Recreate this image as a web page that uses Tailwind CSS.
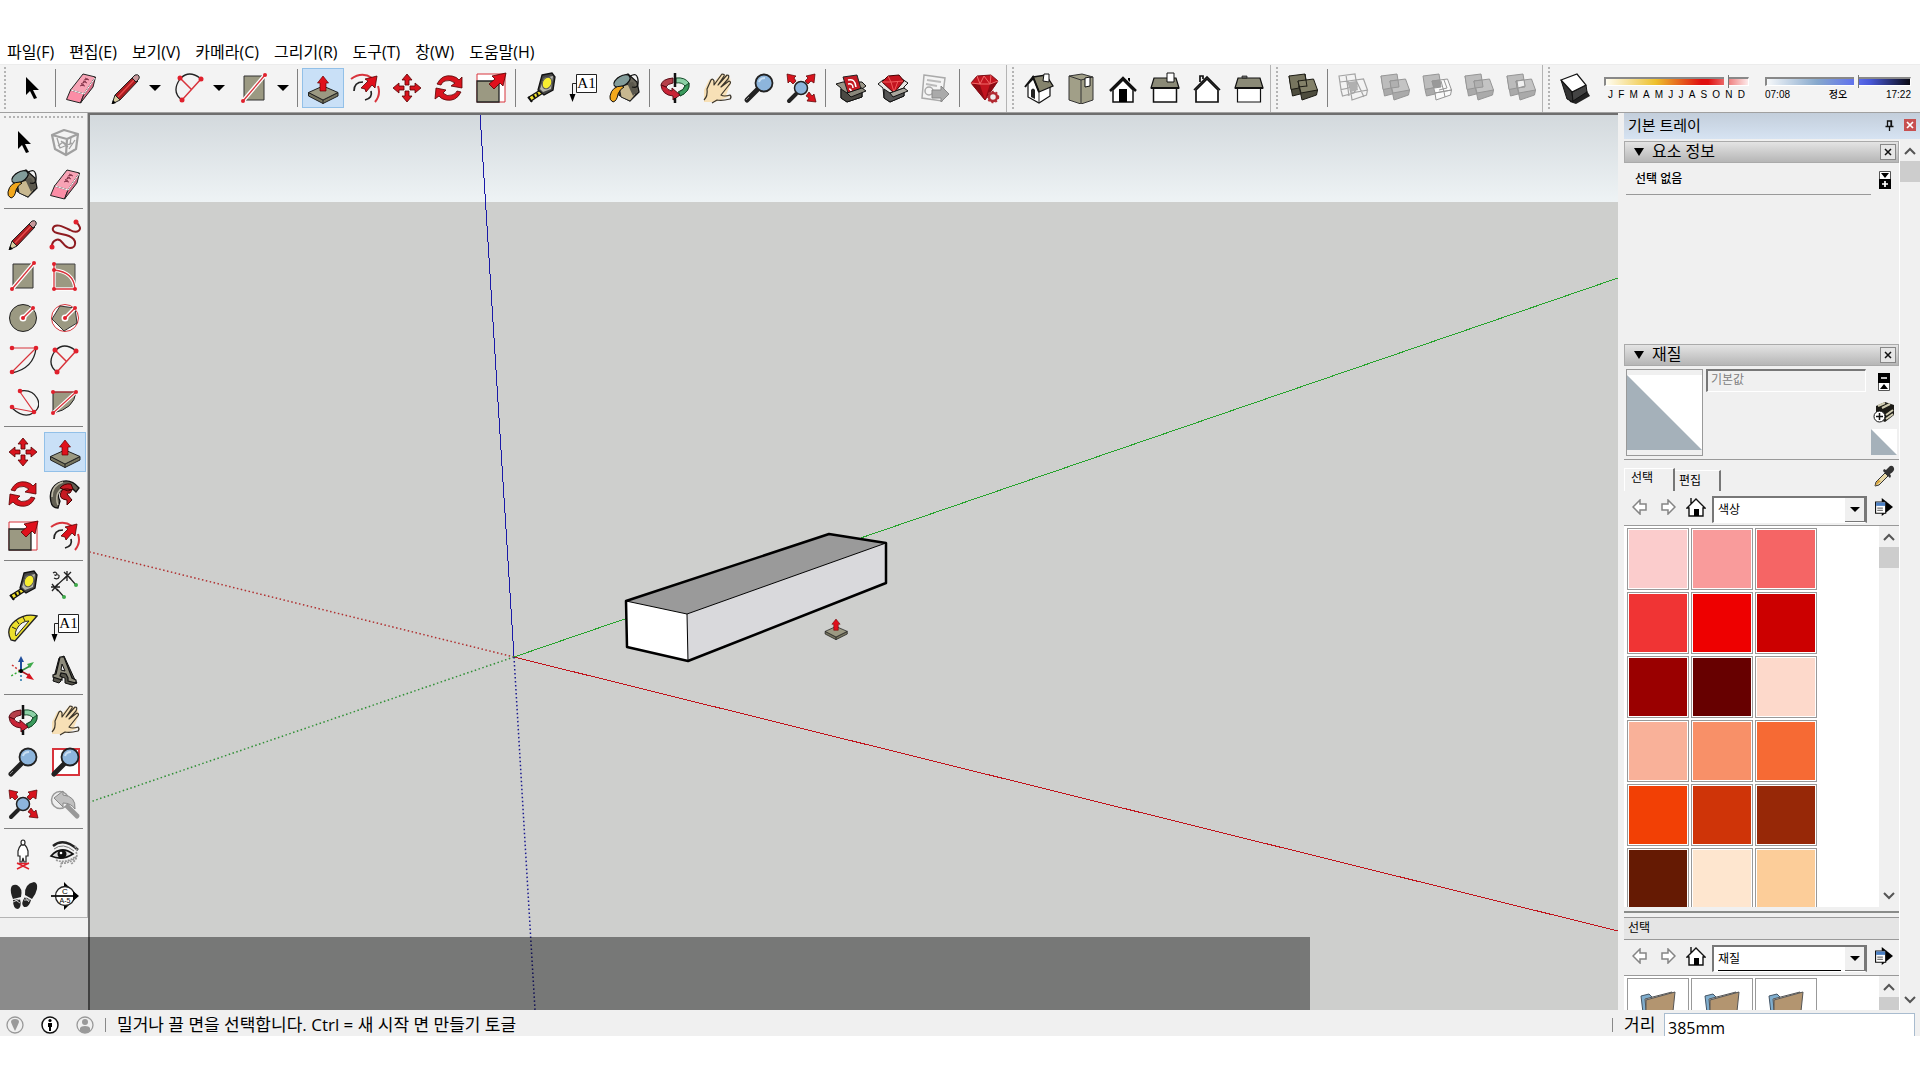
<!DOCTYPE html>
<html lang="ko">
<head>
    <meta charset="UTF-8">
    <meta name="viewport" content="width=device-width, initial-scale=1.0">
    <title>SketchUp</title>
    <script src="https://cdn.jsdelivr.net/npm/@tailwindcss/browser@4"></script>
</head>
<body class="h-screen flex flex-col overflow-hidden bg-white pt-10 pb-11 text-black font-['Open_Sans','Noto_Sans_CJK_KR',sans-serif]">

    <!-- Icon sprite -->
    <svg class="hidden" xmlns="http://www.w3.org/2000/svg">
        <symbol id="i-select" viewBox="0 0 32 32"><path d="M11 5v18l4-4 4 8 3-1-4-8h6z"/></symbol>
        <symbol id="i-eraser" viewBox="0 0 32 32"><g stroke="#222" stroke-linejoin="round"><path fill="#f7a3b5" d="M18 2l12.500 3L19 22 5.500 18z"/><path fill="#fb8da6" d="M5.500 18L19 22l-3.500 9-14-3.500z"/><path fill="#d86f88" d="M30.500 5L28 15 15.500 31 19 22z"/></g><path d="M6 18l13 4L30 6" stroke="#fff" fill="none"/><path d="M15 14l4-2m-3 0l5-3m-2-1l4-1m-7 6l4 1m-2-5l4 2m-2-5l4 2" stroke="#803045" fill="none"/></symbol>
        <symbol id="i-pencil" viewBox="0 0 32 32"><path fill="#a91c20" stroke="#222" d="M5 23L23 5l5 4-18 19z"/><path d="M8 25L25 7" stroke="#e8494b" stroke-width="1.500"/><path fill="#d9cda0" stroke="#222" d="M5 23l5 5-8 4z"/><path d="M2 32l1-4 3 3z"/><path fill="#c9999c" stroke="#222" d="M22 6l3-3q3-1 4 1t-1 4l-2 2z"/></symbol>
        <symbol id="i-freehand" viewBox="0 0 32 32"><path d="M27 4C36 12 28 16 21 12 13 8 6 5 4 10c-2 6 9 5 16 8 9 4 7 12 1 12-7 0-8-11-14-8-5 2-4 6-4 8" fill="none" stroke="#8e1b20" stroke-width="2"/><g fill="#e0202c"><circle cx="27" cy="4" r="2.500"/><circle cx="3" cy="29" r="2.500"/></g></symbol>
        <symbol id="i-arc" viewBox="0 0 32 32"><path d="M7 6q8-8 19 0M6 7q-9 13 2 21" fill="none" stroke="#222" stroke-width="1.300"/><path d="M7 7l10 10M27 7L8 28" stroke="#d8343c" stroke-width="1.500"/><g fill="#e0202c"><circle cx="6" cy="6" r="2.500"/><circle cx="27" cy="7" r="2.500"/><circle cx="8" cy="28" r="2.500"/></g></symbol>
        <symbol id="i-line-rect" viewBox="0 0 32 32"><path fill="#9b9982" stroke="#333" d="M6 4h20v24H6z"/><path d="M5 29L27 3" stroke="#fff" stroke-width="4"/><path d="M5 29L27 3" stroke="#d8343c" stroke-width="1.300"/><g fill="#e0202c"><circle cx="5" cy="29" r="2"/><circle cx="27" cy="3" r="2"/></g></symbol>
        <symbol id="i-rotrect" viewBox="0 0 32 32"><path fill="#9b9982" stroke="#444" d="M6 4h20v24H6z"/><path d="M5 4v25h21Q25 12 5 10" fill="none" stroke="#fff" stroke-width="3.500"/><path d="M5 4v25h21Q25 12 5 10" fill="none" stroke="#d8343c" stroke-width="1.300"/><g fill="#e0202c"><circle cx="5" cy="4" r="2"/><circle cx="5" cy="10" r="2"/><circle cx="5" cy="29" r="2"/><circle cx="26" cy="29" r="2"/></g></symbol>
        <symbol id="i-circle" viewBox="0 0 32 32"><circle cx="16" cy="16" r="13.500" fill="#9b9982" stroke="#222"/><path d="M16 16L26 6" stroke="#fff" stroke-width="4"/><circle cx="16" cy="16" r="3.500" fill="#fff"/><path d="M16 16L26 6" stroke="#d8343c" stroke-width="1.500"/><g fill="#e0202c"><circle cx="16" cy="16" r="2"/><circle cx="26" cy="6" r="2"/></g></symbol>
        <symbol id="i-polygon" viewBox="0 0 32 32"><circle cx="16" cy="16" r="13.500" fill="#fff" stroke="#d8343c"/><path fill="#9b9982" stroke="#333" d="M26 6l2 15-13 8L3 17 11 4z"/><path d="M16 16L26 6" stroke="#fff" stroke-width="4"/><circle cx="16" cy="16" r="3.500" fill="#fff"/><path d="M16 16L26 6" stroke="#d8343c" stroke-width="1.500"/><g fill="#e0202c"><circle cx="16" cy="16" r="2"/><circle cx="26" cy="6" r="2"/></g></symbol>
        <symbol id="i-arc2" viewBox="0 0 32 32"><path d="M29 4q-2 20-24 25" fill="none" stroke="#222" stroke-width="1.300"/><path d="M5 4h24L5 28" fill="none" stroke="#d8343c" stroke-width="1.200"/><g fill="#e0202c"><circle cx="5" cy="4" r="2.300"/><circle cx="29" cy="4" r="2.300"/><circle cx="5" cy="28" r="2.300"/></g></symbol>
        <symbol id="i-arc3" viewBox="0 0 32 32"><path d="M13 5q12-2 17 7t-4 15-21-5" fill="none" stroke="#222" stroke-width="1.300"/><path d="M13 6l14 20-21-4" fill="none" stroke="#d8343c" stroke-width="1.200"/><g fill="#e0202c"><circle cx="13" cy="5" r="2.300"/><circle cx="27" cy="26" r="2.300"/><circle cx="5" cy="21" r="2.300"/></g></symbol>
        <symbol id="i-pie" viewBox="0 0 32 32"><path fill="#9b9982" stroke="#222" d="M4 6h23q-2 17-23 21z"/><path d="M4 27L27 6" stroke="#fff" stroke-width="3.500"/><path d="M4 6h23L4 27" fill="none" stroke="#d8343c" stroke-width="1.200"/><g fill="#e0202c"><circle cx="4" cy="6" r="2"/><circle cx="27" cy="6" r="2"/><circle cx="4" cy="27" r="2"/></g></symbol>
        <symbol id="i-pushpull" viewBox="0 0 32 32"><g stroke="#222" stroke-linejoin="round"><path fill="#77755f" d="M1.500 20.500L16 28l15-7.500v3.500L16 31.500 1.500 24z"/><path fill="#9b9982" d="M1.500 20.500L16 14l15 6.500L16 28z"/></g><path d="M16 28v4" stroke="#222"/><path fill="#e0101c" stroke="#600" stroke-width=".7" d="M16 4l5.500 7H19v8h-6v-8h-2.500z"/></symbol>
        <symbol id="i-offset" viewBox="0 0 32 32"><path d="M2 7Q13-1 23 6M29 14q3 9-3 16" fill="none" stroke="#d8343c" stroke-width="2"/><path d="M5 19q0-9 9-9M22 19q2 7-6 9" fill="none" stroke="#222" stroke-width="1.700"/><path fill="#e0101c" stroke="#500" stroke-width=".8" d="M28 4l-2 12-3-3-6 7-1-3-4-1 7-7-3-2z"/></symbol>
        <symbol id="i-move" viewBox="0 0 32 32"><path fill="#d8141e" stroke="#500" stroke-width=".8" d="M16 2l5 6h-3v5h-4V8h-3zM16 30l5-6h-3v-5h-4v5h-3zM2 16l6-5v3h5v4H8v3zM30 16l-6-5v3h-5v4h5v3z"/></symbol>
        <symbol id="i-rotate" viewBox="0 0 32 32"><path fill="#d8141e" stroke="#500" stroke-width=".8" d="M4 12Q9 2 19 4q5 1 7 4l3-3v11l-11-2 4-3q-5-4-10-2-3 1-4 4zM28 20q-5 10-15 8-5-1-7-4l-4 3 1-11 10 2-3 3q4 4 9 2 4-1 5-4z"/></symbol>
        <symbol id="i-scale" viewBox="0 0 32 32"><path fill="#fff" stroke="#d8343c" d="M2 2h28v28H2z"/><path fill="#9b9982" stroke="#222" stroke-width="1.300" d="M2 9h22v21H2z"/><path fill="#e0101c" stroke="#500" stroke-width=".8" d="M31 1l-3 13-3-3-6 6-5-5 6-5-3-3z"/></symbol>
        <symbol id="i-tape" viewBox="0 0 32 32"><path d="M4 25l13-8 1 4-12 8z" fill="#f3e32e" stroke="#111" stroke-width="1.300"/><path d="M3 25l4 5M8 23l2 3M12 21l1 3" stroke="#111" stroke-width="2"/><path fill="#454545" stroke="#111" stroke-width="1.300" d="M17 3l10-2 3 4-2 13-9 5-6-5z"/><path fill="#b9b9ae" d="M19 6l9-2-2 13-8 3-3-3z"/><ellipse cx="22" cy="11" rx="4.500" ry="6" transform="rotate(25 22 11)" fill="#f7ee30" stroke="#555"/></symbol>
        <symbol id="i-text" viewBox="0 0 32 32"><path d="M5.500 27V11.500H10" fill="none" stroke="#222"/><path d="M2.500 22h6l-3 8z"/><path fill="#fff" stroke="#222" d="M9.500 2.500h20v18h-20z"/><text x="19.500" y="16" font-family="Liberation Serif, serif" font-size="15" text-anchor="middle">A1</text></symbol>
        <symbol id="i-paint" viewBox="0 0 32 32"><path fill="#6b675b" stroke="#111" stroke-width="1.300" d="M9 6l10-4 9 8 2 10-9 9-11-6z"/><path fill="#c8b890" stroke="#222" d="M10 14l12-2 5 10-6 7-9-4z"/><path fill="#5a574c" d="M18 11l6-1 5 9-5 5z"/><ellipse cx="13" cy="9" rx="9" ry="5" transform="rotate(-30 13 9)" fill="#829c9a" stroke="#111" stroke-width="1.200"/><path d="M20 5q8-6 9 3t-6 7" fill="none" stroke="#111" stroke-width="1.300"/><path fill="#f2a81d" stroke="#111" d="M13 14Q3 14 1 24q-1 4 3 6 4-1 5-8 2-5 6-7z"/></symbol>
        <symbol id="i-orbit" viewBox="0 0 32 32"><path fill="#8bd0a5" stroke="#184d2c" d="M17 6q9-1 13 5 1 9-9 13l-2-4q6-2 7-6-3-4-9-3z"/><path fill="#3a9a5c" stroke="#184d2c" d="M30 11q1 9-9 13l-1-4q5-2 6-6z"/><path fill="#b5404a" stroke="#5a0c16" d="M14 6Q3 7 2 13l5 2q1-3 7-4z"/><path fill="#c92336" stroke="#5a0c16" d="M2 13q1 10 12 11v4l7-5-8-7v3q-5-1-6-4z"/><path d="M16 1v14M16 26v5" stroke="#111" stroke-width="2.500"/></symbol>
        <symbol id="i-pan" viewBox="0 0 32 32"><path fill="#f7e0b6" d="M3 30V18l5-10 2-1 4 2 6-7 6 1 3 3 1 5-5 12 4 1-7 3-8 3z"/><path fill="none" stroke="#3a342a" stroke-width="1.200" stroke-linejoin="round" d="M3 28q4-4 3-11L10 8q2-2 3 1v4l8-11q3 0 2 2l-6 9 9-10q3 0 1 4l-7 8 8-6q3 1 0 4l-8 10q3 2 9 0 2 2 0 4-8 2-13 1l-5 3"/></symbol>
        <symbol id="i-zoom" viewBox="0 0 32 32"><path d="M4 28l10-10" stroke="#222" stroke-width="5" stroke-linecap="round"/><path d="M3 28l3-3" stroke="#888" stroke-width="1"/><circle cx="21" cy="11" r="8.500" fill="#8db5dc" stroke="#222" stroke-width="1.800"/><path d="M16 10q1-4 6-4" stroke="#c8def2" stroke-width="2" fill="none"/></symbol>
        <symbol id="i-zoomwin" viewBox="0 0 32 32"><path fill="#fff" stroke="#d8343c" stroke-width="2" d="M4 3h26v26H4z"/><path d="M5 28l10-10" stroke="#222" stroke-width="5" stroke-linecap="round"/><circle cx="21" cy="11" r="8.500" fill="#8db5dc" stroke="#222" stroke-width="1.800"/><path d="M16 10q1-4 6-4" stroke="#c8def2" stroke-width="2" fill="none"/></symbol>
        <symbol id="i-zoomext" viewBox="0 0 32 32"><path d="M4 29l7-7" stroke="#222" stroke-width="4" stroke-linecap="round"/><circle cx="16" cy="16" r="6.500" fill="#8db5dc" stroke="#222" stroke-width="1.500"/><path fill="#d8141e" stroke="#500" stroke-width=".7" d="M2 2l9 2-2 2 2 3-3 3-3-3-2 2zM30 2l-9 2 2 2-3 3 3 3 3-3 3 2zM31 30l-9-1 2-3-3-2 3-4 3 4 2-2z"/></symbol>
        <symbol id="i-zoomprev" viewBox="0 0 32 32"><path d="M18 18l10 10" stroke="#999" stroke-width="5" stroke-linecap="round"/><circle cx="11" cy="12" r="8.500" fill="#eee" stroke="#999" stroke-width="1.500"/><path fill="#c0c0c0" stroke="#888" d="M5 10l9-7v4q13 1 12 14-4-6-12-6v4z"/></symbol>
        <symbol id="i-warehouse" viewBox="0 0 32 32"><path fill="#9a9688" stroke="#111" d="M1 12l7-2 19 0 4 4-4 3v8l-15 5-6-4V16z"/><path fill="#4b4943" stroke="#111" d="M6 17l6 4 15-5v9l-15 5-6-4z"/><path fill="#c31a24" stroke="#222" d="M8 5l14-2 4 14-13 4z"/><path d="M13 8q7-2 8 7M13 12q5-1 5 4M14 17q2 0 2 2" stroke="#fff" stroke-width="1.500" fill="none"/><path fill="#8a877b" stroke="#111" d="M12 21l15-5 4 3-15 6z"/></symbol>
        <symbol id="i-extension" viewBox="0 0 32 32"><path fill="#e8e8e4" stroke="#111" d="M1 12l5-4 19-1 6 4-4 4v9l-14 6-6-4-1-10z"/><path fill="#555" stroke="#111" d="M7 17l6 4 14-5v8l-14 6-6-4z"/><path fill="#c3141f" stroke="#400" d="M5 10l6-6 11-1 5 6-10 12z"/><path d="M5 10h9l12-1M11 4l3 6 3 10 4-11" stroke="#f05a5a" fill="none"/><path fill="#a9a79e" stroke="#111" d="M13 21l14-5 4 3-15 6z"/></symbol>
        <symbol id="i-layout" viewBox="0 0 32 32"><path fill="#f4f4f4" stroke="#aaa" stroke-width="1.500" d="M5 3l21 3-3 23-20-3z"/><path d="M8 8l14 2M7 12l11 2" stroke="#bbb" stroke-width="2"/><circle cx="10" cy="19" r="4" fill="none" stroke="#aaa" stroke-width="1.500"/><path fill="#aaa" stroke="#888" d="M13 18h9v-4l8 8-8 8v-4h-9z"/></symbol>
        <symbol id="i-ruby" viewBox="0 0 32 32"><path fill="#c3141f" stroke="#7a0c14" d="M2 11l6-7 14-1 7 6-13 19z"/><path fill="#8e0b14" d="M2 11l9 2 5 15zM29 9l-8 3-5 16z"/><path d="M2 11l9 1 10 0 8-3M8 4l3 8 4-8 6 8 1-9" stroke="#f06a6a" fill="none"/><circle cx="24" cy="25" r="4" fill="#eee" stroke="#b22a32" stroke-width="2.500"/><circle cx="24" cy="25" r="5.500" fill="none" stroke="#b22a32" stroke-width="1.500" stroke-dasharray="2 2"/></symbol>
        <symbol id="i-iso" viewBox="0 0 32 32"><path fill="#fff" stroke="#111" stroke-width="1.200" d="M5 12l7-7 15 9v10l-11 7-11-6z"/><path d="M16 20v11" stroke="#222"/><path fill="#85836d" stroke="#111" stroke-width="1.300" d="M10 5L23 3l7 11-14 6z"/><path d="M2 15l8-10 6 15" fill="none" stroke="#111" stroke-width="2"/><path fill="#222" d="M8 25v-7q2-3 4 0v9z"/><path fill="#fff" stroke="#111" d="M20 9l1-7h5v8z"/></symbol>
        <symbol id="i-top" viewBox="0 0 32 32"><path fill="#a19f88" stroke="#333" d="M4 4l13-2 11 3v23l-12 4-12-4z"/><path d="M16 8v24M4 4l12 4 12-3" stroke="#333" fill="none"/><path fill="#fff" stroke="#111" d="M20 6l5-1v9l-5 1z"/></symbol>
        <symbol id="i-front" viewBox="0 0 32 32"><path fill="#fff" stroke="#111" stroke-width="1.500" d="M6 18L16 8l10 10v12H6z"/><path d="M3 19L16 6l13 13" fill="none" stroke="#111" stroke-width="2.500"/><path d="M12 17h8v13h-8zM21 6h2v4l-2-2z"/></symbol>
        <symbol id="i-right" viewBox="0 0 32 32"><path fill="#fff" stroke="#111" stroke-width="1.500" d="M4.500 16h23v14h-23z"/><path fill="#8b8a77" stroke="#111" stroke-width="1.200" d="M5 6h22l3 10H2z"/><path d="M2 16h28" stroke="#111" stroke-width="2"/><path fill="#fff" stroke="#111" d="M18 1h7v9h-7z"/></symbol>
        <symbol id="i-back" viewBox="0 0 32 32"><path fill="#fff" stroke="#111" stroke-width="1.700" d="M5 18L16 7l11 11v12H5z"/><path d="M3 18L16 5l13 13M9 10V4h3v3" fill="none" stroke="#111" stroke-width="1.700"/></symbol>
        <symbol id="i-left" viewBox="0 0 32 32"><path fill="#fff" stroke="#111" stroke-width="1.200" d="M4.500 16h23v14h-23z"/><path fill="#8b8a77" stroke="#111" stroke-width="1.200" d="M5 6h22l3 10H2z"/><path d="M2 16h28" stroke="#111" stroke-width="2"/><path fill="#777" stroke="#111" stroke-width=".7" d="M9 4h5v2H9z"/></symbol>
        <symbol id="i-solid" viewBox="0 0 32 32"><g stroke="#1c1b14" stroke-linejoin="round"><path fill="#4e4d3e" d="M2 4l3.500 20L17 21l3-6z"/><path fill="#77755f" d="M2 4l16-2 2 12.500-16 3z"/><path fill="#4e4d3e" d="M11 9l4 19 14.500-5 1-5z"/><path fill="#838169" d="M11 9l15.500-2 4 11L14 21z"/><path fill="none" d="M18 2l2 12.500M11 15l9-1"/></g></symbol>
        <symbol id="i-solid-gray" viewBox="0 0 32 32"><g stroke="#969696" stroke-linejoin="round"><path fill="#aaa" d="M2 4l3.500 20L17 21l3-6z"/><path fill="#bcbcbc" d="M2 4l16-2 2 12.500-16 3z"/><path fill="#aaa" d="M11 9l4 19 14.500-5 1-5z"/><path fill="#c4c4c4" d="M11 9l15.500-2 4 11L14 21z"/><path fill="#b0b0b0" d="M11 9l8-1 1 7-8 1z"/></g></symbol>
        <symbol id="i-solid-union" viewBox="0 0 32 32"><use href="#i-solid-gray"/><path fill="#f0f0f0" stroke="#969696" d="M12 9l7-1 1 6-7 2z"/></symbol>
        <symbol id="i-solid-wire" viewBox="0 0 32 32"><g fill="none" stroke="#a4a4a4" stroke-width="1.200"><path d="M2 4l16-2 2 12.500-16 3zM4 18l1.500 6L17 21l3-6M11 9l15.500-2 4 11L14 21zM14 21l1 7 14.500-5 1-5M3 10l16-2M9 3l3 21M19 8l8 17"/></g><path fill="#b0b0b0" d="M11 10l8-1 2 9-7 2z"/></symbol>
        <symbol id="i-solid-sub" viewBox="0 0 32 32"><g stroke="#969696"><path fill="#bcbcbc" d="M2 4l16-2 2 12.500-16 3z"/><path fill="#aaa" d="M4 17.500l10-2 2 6-10.500 2.500z"/><path fill="#fafafa" d="M11 9l15.500-2 4 11L14 21zM14 21l1 7 14.500-5 1-5z"/><path fill="none" d="M20 9l3 11 1 5M18 18l8-2-3-8"/><path fill="#999" d="M11 9l8-1 1 7-7 1z"/></g></symbol>
        <symbol id="i-shadow" viewBox="0 0 32 32"><path d="M4 10l14 10 10-1 3 5-14 8-6-2z" fill="#222"/><path fill="#333" stroke="#111" d="M2 8l11 12 1 10-6-3z"/><path fill="#444" stroke="#111" d="M13 20l14-7 1 7-14 9z"/><path fill="#fff" stroke="#111" stroke-width="1.200" d="M2 8l16-6 9 11-14 7z"/></symbol>
        <symbol id="i-component" viewBox="0 0 32 32"><g fill="none" stroke="#a0a0a0" stroke-width="2.200" stroke-linejoin="round"><path d="M3 9l12-5 14 4-11 5zM3 9l3 14 11 6 1-16zM29 8l-2 15-10 6"/><path d="M8 12l3 10 12-5M22 11l-1 8M12 15l7 6M9 20l5-4 3 2M20 23l6-9" stroke-width="1.300"/></g></symbol>
        <symbol id="i-follow" viewBox="0 0 32 32"><path fill="#625f52" stroke="#111" stroke-width="1.300" d="M30 10Q21-1 9 5-1 11 2 24q1 6 7 6l2-7q-5-9 5-13 6-2 11 4z"/><path d="M3 19Q3 7 14 4M9 27Q4 13 19 7" stroke="#bbb7a5" stroke-width="1.500" fill="none"/><path fill="#c51a22" stroke="#400" d="M11 10l8 3 5-2-2-5q-7-1-11 4zM23 12q-9-3-11 2-3 7 6 8v5l5-5-5-6q-1-1 3-1z"/></symbol>
        <symbol id="i-dimension" viewBox="0 0 32 32"><path d="M6 17L18 6M8 19l7 8M20 7l7 8" stroke="#222" stroke-width="1.200" fill="none"/><path d="M3 14l6 7M9 14l-6 7M2 17h9M15 2l7 7M22 2l-7 7M18 1v10" stroke="#222" stroke-width="1.300"/><g fill="#3faa4b"><circle cx="15" cy="27" r="2"/><circle cx="27" cy="15" r="2"/></g><path d="M4 3q3-2 4 1-1 2-2 1 5-1 4 2-1 3-5 1" fill="none" stroke="#222" stroke-width="1.200"/></symbol>
        <symbol id="i-protractor" viewBox="0 0 32 32"><path fill="#ecdf2c" stroke="#222" stroke-width="1.300" d="M30 4Q18 1 8 9T4 28l4 1z"/><path fill="#f3f3f3" stroke="#222" d="M22 9q-7 0-11 6t-2 9z"/><path d="M9 8l3 4M5 15l4 2M16 5l2 4" stroke="#222" stroke-width="1"/></symbol>
        <symbol id="i-axes" viewBox="0 0 32 32"><path d="M13 17L5 11" stroke="#c33" stroke-width="1.500" stroke-dasharray="2 2"/><path d="M13 17l-9 5" stroke="#3a3" stroke-width="1.500" stroke-dasharray="2 2"/><path d="M14 17v11" stroke="#27a" stroke-width="1.500" stroke-dasharray="2 2"/><path d="M14 17V6" stroke="#1f4e9c" stroke-width="2"/><path d="M11 8l3-6 3 6z" fill="#1f4e9c"/><path d="M14 17l9-5" stroke="#2f9040" stroke-width="1.500"/><path d="M20 10l7-2-4 6z" fill="#3faa4b"/><path d="M14 17l9 5" stroke="#b01820" stroke-width="1.500"/><path d="M22 19l5 7-8-2z" fill="#d8141e"/><circle cx="14" cy="17" r="2"/></symbol>
        <symbol id="i-3dtext" viewBox="0 0 32 32"><path fill="#55544a" stroke="#111" d="M10 4l5-2 11 24 2 3-5 2-7-2v-5l-4-1v4l-2 2-6-2z"/><path fill="#8d8b7c" stroke="#111" stroke-width="1.200" d="M11 3h4l8 21 4 2v3l-8-2v-3l-2-4-5-1-1 3 2 1v3l-9-3v-2l3-1z"/><path fill="#f2f2f2" stroke="#111" d="M13 10l3 7-4-1z"/></symbol>
        <symbol id="i-camera" viewBox="0 0 32 32"><path d="M10 31l12-6M22 31l-12-6M10 25.500h12" stroke="#e0202c" stroke-width="1.500"/><path fill="#fff" stroke="#222" stroke-width="1.200" d="M14 7q-2 2-3 6v5h2v6h2l1-4 1 4h2v-6h2v-5q-1-4-3-6z"/><ellipse cx="16" cy="4.500" rx="2" ry="2.500" fill="#fff" stroke="#222" stroke-width="1.200"/></symbol>
        <symbol id="i-eye" viewBox="0 0 32 32"><path d="M4 8Q15-1 29 12" stroke="#222" stroke-width="2.500" fill="none"/><path d="M5 11Q14 4 25 13" stroke="#777" fill="none"/><path fill="#ddd" stroke="#111" stroke-width="1.700" d="M2 18Q12 7 24 16 13 23 2 18z"/><circle cx="13" cy="16" r="4.500" fill="#111"/><circle cx="12" cy="15" r="1.300" fill="#fff"/><path d="M7 22q9 4 19-3M12 25q9 1 16-7M11 29q2-1 1-4M27 14q3 6-5 12M26 8l2 4" stroke="#999" fill="none" stroke-width="1.700" stroke-dasharray="2 1"/></symbol>
        <symbol id="i-walk" viewBox="0 0 32 32"><path d="M4 8q1-4 6-3 6 3 4 12l-8 2Q3 12 4 8zM27 2q4 1 3 7-1 5-5 10l-7-4Q17 4 27 2z" fill="#222"/><path d="M6 20l7-1q2 8-2 10-5 0-5-9zM18 17l6 3q-2 8-7 7-4-3 1-10z" fill="#222"/><path d="M7 19l6 4M6 22l7-3M18 17l4 5M17 20l6 0" stroke="#ddd" stroke-width=".9"/></symbol>
        <symbol id="i-section" viewBox="0 0 32 32"><path d="M15 2l14 14-14 14v-4l6-10-6-10z"/><circle cx="16" cy="16" r="9.500" fill="#fff" stroke="#222" stroke-width="1.300"/><path d="M2 16h27" stroke="#111" stroke-width="1.800"/><path d="M24 11l6 5-6 5z"/><text x="16" y="14" font-family="Liberation Sans, sans-serif" font-size="8" text-anchor="middle">C</text><text x="16" y="23" font-family="Liberation Sans, sans-serif" font-size="7" text-anchor="middle">A-5</text></symbol>
        <symbol id="i-nav-back" viewBox="0 0 16 16"><path fill="#fff" stroke="#858585" stroke-width="1.500" d="M1 8l7-7v4h6v6H8v4z"/></symbol>
        <symbol id="i-nav-fwd" viewBox="0 0 16 16"><path fill="#fff" stroke="#858585" stroke-width="1.500" d="M15 8L8 1v4H2v6h6v4z"/></symbol>
        <symbol id="i-nav-home" viewBox="0 0 20 20"><path fill="#fff" stroke="#111" stroke-width="1.400" d="M1 11l9-9 9 9h-2v8H3v-8zM5 7V1"/><path d="M8 12h5v7H8z"/></symbol>
        <symbol id="i-nav-export" viewBox="0 0 16 16"><path d="M6 0l10 8-10 8z"/><path fill="#fff" stroke="#111" d="M.5 3.500h9v10h-9z"/><path fill="#4a7fc4" d="M1 4h8v3H1z"/><path d="M2 9h5M2 11h5" stroke="#777"/></symbol>
        <symbol id="i-folder" viewBox="0 0 36 30"><path fill="#7fadcd" stroke="#456" d="M1 5l8-2 3 3 2 24H4z"/><path fill="#ddd" stroke="#555" d="M5 8l27-7v29H7z"/><path fill="#b39570" stroke="#555" d="M6 9l29-8-3 29H6z"/></symbol>
        <symbol id="i-chev-up" viewBox="0 0 12 8"><path d="M1 7l5-5 5 5" fill="none" stroke="#555" stroke-width="2"/></symbol>
        <symbol id="i-chev-down" viewBox="0 0 12 8"><path d="M1 1l5 5 5-5" fill="none" stroke="#555" stroke-width="2"/></symbol>
    </svg>

    <!-- Menu bar -->
    <nav class="h-6 shrink-0 flex items-center gap-[15px] px-[7px] text-base leading-6 whitespace-nowrap">
        <a href="#">파일(F)</a>
        <a href="#">편집(E)</a>
        <a href="#">보기(V)</a>
        <a href="#">카메라(C)</a>
        <a href="#">그리기(R)</a>
        <a href="#">도구(T)</a>
        <a href="#">창(W)</a>
        <a href="#">도움말(H)</a>
    </nav>

    <!-- Top toolbars -->
    <header class="h-12 shrink-0 flex bg-[#f3f3f3] border-t border-[#ececec]">
        <div data-tools="select | eraser pencil+ arc+ line-rect+ | pushpull* offset move rotate scale | tape text paint | orbit pan zoom zoomext | warehouse extension layout | ruby" class="flex items-center pb-px border-r border-[#b4b4b4]"></div>
        <div data-tools="iso top front right back left" class="flex items-center pb-px pl-px border-r border-[#b4b4b4]"></div>
        <div data-tools="solid | solid-wire solid-gray solid-sub solid-gray solid-union" class="flex items-center pb-px pl-px border-r border-[#b4b4b4]"></div>
        <div data-tools="shadow" class="flex items-center pb-px pl-px"></div>
        <div class="flex items-center gap-4 pl-2 text-[10px] leading-3 font-medium font-['Liberation_Sans','Noto_Sans_CJK_KR',sans-serif]">
            <div class="w-[145px]">
                <input type="range" min="0" max="100" value="86" aria-label="날짜" class="block w-full h-[9px] appearance-none border-t-2 border-l-2 border-t-[#888] border-l-[#888] border-b border-r border-b-white border-r-white bg-[linear-gradient(to_right,#fffdf2,#edc02c_35%,#e01010_67%,#e01010_72%,#fdeaea)] [&::-webkit-slider-thumb]:appearance-none [&::-webkit-slider-thumb]:w-[5px] [&::-webkit-slider-thumb]:h-[13px] [&::-webkit-slider-thumb]:bg-[#f3f3f3] [&::-webkit-slider-thumb]:border-r [&::-webkit-slider-thumb]:border-[#777]">
                <div class="mt-[3px] flex justify-between px-1"><span>J</span><span>F</span><span>M</span><span>A</span><span>M</span><span>J</span><span>J</span><span>A</span><span>S</span><span>O</span><span>N</span><span>D</span></div>
            </div>
            <div class="w-[146px]">
                <input type="range" min="0" max="100" value="63" aria-label="시간" class="block w-full h-[9px] appearance-none border-t-2 border-l-2 border-t-[#888] border-l-[#888] border-b border-r border-b-white border-r-white bg-[linear-gradient(to_right,#f6f8fa,#86a8cc_35%,#5f70ee_62%,#4858d8_72%,#0a0a14)] [&::-webkit-slider-thumb]:appearance-none [&::-webkit-slider-thumb]:w-[5px] [&::-webkit-slider-thumb]:h-[13px] [&::-webkit-slider-thumb]:bg-[#f3f3f3] [&::-webkit-slider-thumb]:border-r [&::-webkit-slider-thumb]:border-[#777]">
                <div class="mt-[3px] flex justify-between"><span>07:08</span><span>정오</span><span>17:22</span></div>
            </div>
        </div>
    </header>

    <main class="relative flex-1 min-h-0 flex bg-[#f0f0f0] border-t border-[#a0a0a0]">

        <!-- Large tool set -->
        <aside class="w-[90px] shrink-0 border-r-2 border-[#6e6e6e]">
            <div class="bg-[#f3f3f3] border-r border-b border-[#b4b4b4] px-0.5 pt-[3px]">
                <div class="mx-0.5 mb-[3px] border-t-2 border-dotted border-[#b4b4b4]"></div>
                <div id="tool-grid"></div>
            </div>
        </aside>

        <!-- Model view -->
        <section class="flex-1 min-w-0 border-t-2 border-[#6e6e6e]">
            <svg class="block w-full h-full" viewBox="90 115 1528 895" preserveAspectRatio="xMinYMin slice">
                <defs>
                    <linearGradient id="sky" x1="0" y1="0" x2="0" y2="1"><stop offset="0" stop-color="#d3d9dd"/><stop offset="1" stop-color="#eef3f5"/></linearGradient>
                </defs>
                <path fill="#cecfcd" d="M90 115h3000v2000H90z"/>
                <path fill="url(#sky)" d="M90 115h3000v87H90z"/>
                <g fill="none" shape-rendering="crispEdges">
                    <path stroke="#1a1aa8" d="M480 114l34 543"/>
                    <path stroke="#26a32c" d="M514 657l1104-379"/>
                    <path stroke="#c0141c" d="M514 657l1104 274"/>
                </g>
                <g fill="none" stroke-width="1.500" stroke-dasharray="1.500 2.500">
                    <path stroke="#b03030" d="M514 657L90 552"/>
                    <path stroke="#2f8f35" d="M514 657L90 802"/>
                    <path stroke="#1a1a90" d="M514 657l21 353"/>
                </g>
                <path fill="#9a9a9a" d="M626 601l61 13 199-71-57-9z"/>
                <path fill="#fff" d="M626 601l61 13 1 47-61-14z"/>
                <path fill="#d9d9dc" d="M687 614l199-71v40l-198 78z"/>
                <path fill="none" stroke="#000" d="M626 601l61 13 199-71M687 614l1 47"/>
                <path fill="none" stroke="#000" stroke-width="2.500" stroke-linejoin="round" d="M626 601l203-67 57 9v40l-198 78-61-14z"/>
                <use href="#i-pushpull" x="824" y="616" width="24" height="24"/>
            </svg>
        </section>

        <!-- Tray -->
        <aside class="w-[302px] shrink-0 pl-1.5 flex flex-col">
            <div class="h-[26px] shrink-0 flex items-center justify-between pl-1 pr-1 pb-0.5 bg-linear-to-b from-[#c3cedb] to-[#d6e3f2]">
                <h2 class="text-[15px] leading-6">기본 트레이</h2>
                <div class="flex items-center gap-2">
                    <button aria-label="자동 숨기기"><svg class="w-3 h-3" viewBox="0 0 12 12"><path d="M3.500 7V2h4v5M1.500 7.500h8M5.500 8v4M7 2v5" fill="none" stroke="#111" stroke-width="1.300"/></svg></button>
                    <button aria-label="닫기" class="w-3 h-3 bg-[#c75050] flex items-center justify-center"><svg class="w-2 h-2" viewBox="0 0 8 8"><path d="M1 1l6 6M7 1L1 7" stroke="#fff" stroke-width="1.700"/></svg></button>
                </div>
            </div>
            <div class="flex-1 min-h-0 flex pt-0.5">
                <div class="flex-1 min-w-0 flex flex-col border-r border-white">

                    <!-- Entity info -->
                    <div class="h-[22px] shrink-0 flex items-center border border-[#aaa] bg-linear-to-b from-[#e4e4e4] to-[#b6b6b6] pl-2 pr-0.5">
                        <svg class="w-3 h-2.5" viewBox="0 0 12 10"><path d="M1 1h10L6 9z"/></svg>
                        <h3 class="flex-1 pl-[7px] pb-0.5 text-base leading-5">요소 정보</h3>
                        <button aria-label="닫기" class="w-4 h-4 border border-[#888] bg-[#e6e6e6] flex items-center justify-center"><svg class="w-2 h-2" viewBox="0 0 8 8"><path d="M1 1l6 6M7 1L1 7" stroke="#111" stroke-width="1.500"/></svg></button>
                    </div>
                    <div class="h-[181px] shrink-0 flex items-start">
                        <div class="ml-0.5 flex-1 h-8 pl-[9px] border-b border-[#999] text-xs leading-8 font-medium">선택 없음</div>
                        <button aria-label="세부 정보 표시" class="mt-2 ml-2 mr-2"><svg class="w-3 h-[18px]" viewBox="0 0 12 18"><path fill="#fff" stroke="#555" d="M.5.5h11v17H.5z"/><path d="M2 2h8L6 7zM0 8h12v10H0z"/><path d="M6 10v6M3 13h6" stroke="#fff" stroke-width="1.700"/></svg></button>
                    </div>

                    <!-- Materials -->
                    <div class="h-[22px] shrink-0 flex items-center border border-[#aaa] bg-linear-to-b from-[#e4e4e4] to-[#b6b6b6] pl-2 pr-0.5">
                        <svg class="w-3 h-2.5" viewBox="0 0 12 10"><path d="M1 1h10L6 9z"/></svg>
                        <h3 class="flex-1 pl-[7px] pb-0.5 text-base leading-5">재질</h3>
                        <button aria-label="닫기" class="w-4 h-4 border border-[#888] bg-[#e6e6e6] flex items-center justify-center"><svg class="w-2 h-2" viewBox="0 0 8 8"><path d="M1 1l6 6M7 1L1 7" stroke="#111" stroke-width="1.500"/></svg></button>
                    </div>
                    <div class="h-[94px] shrink-0 flex items-start gap-[3px] pl-0.5 pt-[3px] border-b border-[#999]">
                        <div class="w-[77px] h-[87px] border border-[#999] py-[5px]"><svg class="block w-full h-full" viewBox="0 0 75 75" preserveAspectRatio="none"><path fill="#fff" d="M0 0h75v75H0z"/><path fill="#a5b1ba" d="M0 0l75 75H0z"/></svg></div>
                        <input type="text" value="기본값" disabled aria-label="재질 이름" class="w-40 h-[23px] px-[3px] pb-1 text-xs text-[#808080] bg-[#f0f0f0] border-t-2 border-l-2 border-t-[#777] border-l-[#777] border-b border-r border-b-white border-r-white">
                        <div class="flex-1 flex flex-col items-center pt-1 gap-2.5">
                            <button aria-label="보조 선택 창 표시"><svg class="block w-3 h-[18px]" viewBox="0 0 12 18"><path fill="#fff" stroke="#555" d="M.5.5h11v17H.5z"/><path d="M0 0h12v10H0zM2 16h8l-4-5z"/><path fill="none" stroke="#fff" stroke-width="1.500" d="M3 5h6"/></svg></button>
                            <button aria-label="재질 만들기"><svg class="block w-[22px] h-[22px]" viewBox="0 0 22 22"><path d="M3 5l9-4 9 3v10l-9 7-9-4z" fill="#1c1b16"/><path d="M5 5l7-3M9 7l8-4M13 14l7-5M13 18l7-5" stroke="#cfcbb0" stroke-width="2"/><circle cx="6.500" cy="15.500" r="5.500" fill="#fff" stroke="#111"/><path d="M6.500 12v7M3 15.500h7" stroke="#111" stroke-width="1.500"/></svg></button>
                            <button aria-label="기본 재질" class="-mt-1"><svg class="block w-[26px] h-[26px]" viewBox="0 0 26 26"><path fill="#fff" d="M0 0h26v26H0z"/><path fill="#a5b1ba" d="M0 0l26 26H0z"/></svg></button>
                        </div>
                    </div>
                    <div class="h-[31px] shrink-0 flex items-end text-xs">
                        <button class="w-[51px] h-[23px] pl-1.5 pb-1 text-left leading-4 border-t border-l border-white border-r-2 border-r-[#777]">선택</button>
                        <button class="w-[46px] h-[21px] pl-1 text-left leading-4 border-t border-t-white border-r-2 border-r-[#777]">편집</button>
                        <button aria-label="샘플 페인트" class="ml-auto mr-1 mb-1"><svg class="block w-[22px] h-[22px]" viewBox="0 0 22 22"><path d="M12 8L3 17l-1 4 4-1 9-9z" fill="#e8d9a8" stroke="#333"/><path d="M5 15l-3 6 6-5z" fill="#d8a032"/><path d="M10 6l7 7 1-2-1-2q5-3 4-6t-4-2l-4 4-2-1z" fill="#333"/></svg></button>
                    </div>
                    <div class="h-[35px] shrink-0 flex items-center pl-2 pr-1.5 border-b border-[#999]">
                        <button aria-label="뒤로" class="pb-[3px]"><svg class="block w-4 h-4"><use href="#i-nav-back"/></svg></button>
                        <button aria-label="앞으로" class="ml-3 pb-[3px]"><svg class="block w-4 h-4"><use href="#i-nav-fwd"/></svg></button>
                        <button aria-label="모델 내" class="ml-2.5 pb-[3px]"><svg class="block w-5 h-5"><use href="#i-nav-home"/></svg></button>
                        <div class="relative ml-1.5 mt-0.5 flex-1 h-[27px] bg-white border-t-2 border-l-2 border-r-2 border-[#777] border-b border-b-white">
                            <select aria-label="재질 모음" class="block w-full h-full pl-1 text-xs appearance-none outline-none"><option>색상</option><option>나무</option></select>
                            <span class="pointer-events-none absolute right-0 inset-y-0 w-5 bg-[#f0f0f0] border-r border-b border-[#777] flex items-center justify-center"><svg class="w-2.5 h-[5px]" viewBox="0 0 10 5"><path d="M0 0h10L5 5z"/></svg></span>
                        </div>
                        <button aria-label="세부 정보" class="ml-2 pb-[3px]"><svg class="block w-[18px] h-[18px]"><use href="#i-nav-export"/></svg></button>
                    </div>
                    <div class="flex-1 min-h-0 flex bg-white">
                        <div id="swatches" class="flex-1 overflow-hidden grid grid-cols-[repeat(3,62px)] content-start gap-0.5 pl-[3px] pt-0.5"></div>
                        <div class="w-5 flex flex-col items-center justify-between bg-[#f0f0f0] pb-[7px]">
                            <div class="w-full">
                                <div class="h-[21px] flex items-center justify-center"><svg class="w-3 h-2"><use href="#i-chev-up"/></svg></div>
                                <div class="h-[21px] bg-[#cdcdcd]"></div>
                            </div>
                            <svg class="w-3 h-2"><use href="#i-chev-down"/></svg>
                        </div>
                    </div>

                    <!-- Secondary materials pane -->
                    <div class="h-2.5 shrink-0 pt-1"><div class="h-0.5 bg-[#8a8c8a]"></div></div>
                    <div class="h-[23px] shrink-0 border-y border-[#999] bg-[#e5e5e5] pl-1 text-xs leading-5">선택</div>
                    <div class="h-9 shrink-0 flex items-center pl-2 pr-1.5 border-b border-[#999]">
                        <button aria-label="뒤로" class="pb-[3px]"><svg class="block w-4 h-4"><use href="#i-nav-back"/></svg></button>
                        <button aria-label="앞으로" class="ml-3 pb-[3px]"><svg class="block w-4 h-4"><use href="#i-nav-fwd"/></svg></button>
                        <button aria-label="모델 내" class="ml-2.5 pb-[3px]"><svg class="block w-5 h-5"><use href="#i-nav-home"/></svg></button>
                        <div class="relative ml-1.5 mt-0.5 flex-1 h-[27px] bg-white border-t-2 border-l-2 border-r-2 border-[#777] border-b border-b-white">
                            <select aria-label="보조 재질 모음" class="block w-full h-full pl-1 text-xs appearance-none outline-none"><option>재질</option><option>색상</option></select>
                            <span class="pointer-events-none absolute left-1 right-6 bottom-0 h-px bg-black"></span>
                            <span class="pointer-events-none absolute right-0 inset-y-0 w-5 bg-[#f0f0f0] border-r border-b border-[#777] flex items-center justify-center"><svg class="w-2.5 h-[5px]" viewBox="0 0 10 5"><path d="M0 0h10L5 5z"/></svg></span>
                        </div>
                        <button aria-label="세부 정보" class="ml-2 pb-[3px]"><svg class="block w-[18px] h-[18px]"><use href="#i-nav-export"/></svg></button>
                    </div>
                    <div class="h-[34px] shrink-0 flex bg-white">
                        <div class="flex-1 overflow-hidden grid grid-cols-[repeat(3,62px)] content-start gap-0.5 pl-[3px] pt-0.5">
                            <button aria-label="폴더" class="h-[62px] border border-[#999] pt-3 flex justify-center"><svg class="w-9 h-[30px]"><use href="#i-folder"/></svg></button>
                            <button aria-label="폴더" class="h-[62px] border border-[#999] pt-3 flex justify-center"><svg class="w-9 h-[30px]"><use href="#i-folder"/></svg></button>
                            <button aria-label="폴더" class="h-[62px] border border-[#999] pt-3 flex justify-center"><svg class="w-9 h-[30px]"><use href="#i-folder"/></svg></button>
                        </div>
                        <div class="w-5 bg-[#f0f0f0]">
                            <div class="h-[21px] flex items-center justify-center"><svg class="w-3 h-2"><use href="#i-chev-up"/></svg></div>
                            <div class="h-[13px] bg-[#cdcdcd]"></div>
                        </div>
                    </div>
                </div>

                <!-- Tray scrollbar -->
                <div class="w-5 flex flex-col items-center justify-between pb-1.5">
                    <div class="w-full">
                        <div class="h-5 flex items-center justify-center"><svg class="w-3 h-2"><use href="#i-chev-up"/></svg></div>
                        <div class="h-[21px] bg-[#cdcdcd]"></div>
                    </div>
                    <svg class="w-3 h-2"><use href="#i-chev-down"/></svg>
                </div>
            </div>
        </aside>

        <!-- Caption strip over the lower part of the view -->
        <div class="pointer-events-none absolute left-0 bottom-0 w-[1310px] h-[73px] bg-black/42"></div>
    </main>

    <!-- Status bar -->
    <footer class="h-[26px] shrink-0 flex items-center overflow-hidden bg-[#f0f0f0] pl-1.5 pr-[5px] pt-1 text-[17px] leading-5">
        <button aria-label="지리적 위치"><svg class="block w-[18px] h-[18px]" viewBox="0 0 18 18"><circle cx="9" cy="9" r="8" fill="none" stroke="#999" stroke-width="1.300"/><path fill="#999" d="M9 3q4 0 4 3-1 3-4 9-3-6-4-9 0-3 4-3z"/></svg></button>
        <button aria-label="제작자" class="ml-[17px]"><svg class="block w-[18px] h-[18px]" viewBox="0 0 18 18"><circle cx="9" cy="9" r="8" fill="#fff" stroke="#111" stroke-width="1.500"/><circle cx="9" cy="4.500" r="1.600"/><path d="M7 7h4v4h-1v4H8v-4H7z"/></svg></button>
        <button aria-label="로그인" class="ml-[17px]"><svg class="block w-[18px] h-[18px]" viewBox="0 0 18 18"><circle cx="9" cy="9" r="8" fill="none" stroke="#999" stroke-width="1.300"/><circle cx="9" cy="6" r="3" fill="#999"/><path fill="#999" d="M4 15v-3q1-2 5-2t5 2v3q-5 4-10 0z"/></svg></button>
        <span class="ml-[11px] mr-[11px] w-px h-3.5 bg-[#888]"></span>
        <p class="flex-1 whitespace-nowrap">밀거나 끌 면을 선택합니다. Ctrl = 새 시작 면 만들기 토글</p>
        <span class="mr-[11px] w-px h-3.5 bg-[#888]"></span>
        <label for="measure" class="w-10">거리</label>
        <input id="measure" type="text" value="385mm" class="w-[251px] h-6 px-[3px] pt-1 text-base bg-white border border-b-0 border-[#a9bccf]">
    </footer>

    <script>
        function toolButton(name, active) {
            const state = active ? 'bg-[#c9e0f7] border-[#92c0e8]' : 'border-transparent';
            return `<button aria-label="${name}" class="w-[42px] h-10 border ${state} flex items-center justify-center"><svg class="w-8 h-8"><use href="#i-${name}"/></svg></button>`;
        }

        // Top toolbars: "|" is a separator, "+" adds a drop-down arrow, "*" marks the active tool
        document.querySelectorAll('[data-tools]').forEach((bar) => {
            let html = '<span class="mx-1 h-[42px] border-l-2 border-dotted border-[#b4b4b4]"></span>';
            bar.dataset.tools.split(' ').forEach((item) => {
                const name = item.replace(/[+*]/, '');
                if (item === '|') {
                    html += '<span class="ml-[3px] mr-1 w-px h-[38px] bg-[#808080]"></span>';
                } else if (item.endsWith('+')) {
                    html += `<span class="flex items-center ml-1 mr-0.5">
                        <button aria-label="${name}" class="w-10 h-10 flex items-center justify-center"><svg class="w-8 h-8"><use href="#i-${name}"/></svg></button>
                        <button aria-label="${name} 목록" class="w-[18px] h-10 flex items-center justify-center"><svg class="w-3 h-1.5" viewBox="0 0 12 6"><path d="M0 0h12L6 6z"/></svg></button>
                    </span>`;
                } else {
                    html += toolButton(name, item.endsWith('*'));
                }
            });
            bar.innerHTML = html;
        });

        // Left tool set, two per row, one array per block
        const blocks = [
            ['select', 'component', 'paint', 'eraser'],
            ['pencil', 'freehand', 'line-rect', 'rotrect', 'circle', 'polygon', 'arc2', 'arc', 'arc3', 'pie'],
            ['move', 'pushpull', 'rotate', 'follow', 'scale', 'offset'],
            ['tape', 'dimension', 'protractor', 'text', 'axes', '3dtext'],
            ['orbit', 'pan', 'zoom', 'zoomwin', 'zoomext', 'zoomprev'],
            ['camera', 'eye', 'walk', 'section'],
        ];
        document.getElementById('tool-grid').innerHTML = blocks.map((tools) =>
            `<div class="grid grid-cols-[42px_42px] gap-y-0.5 py-px">${tools.map((t) => toolButton(t, t === 'pushpull')).join('')}</div>`
        ).join('<div class="mx-0.5 my-[3px] h-0.5 border-t border-[#808080]"></div>');

        const colors = [
            '#fbcccc', '#f99b9b', '#f56565', '#f03434', '#ee0000', '#cc0000',
            '#9a0000', '#670000', '#fdd9cb', '#f9b199', '#f89068', '#f66a34',
            '#f24005', '#cf3408', '#972807', '#651a03', '#fee6cf', '#fccd99',
        ];
        document.getElementById('swatches').innerHTML = colors.map((c) =>
            `<button aria-label="${c}" class="h-[62px] border border-[#999] p-px"><span class="block h-full" style="background:${c}"></span></button>`
        ).join('');
    </script>
</body>
</html>
